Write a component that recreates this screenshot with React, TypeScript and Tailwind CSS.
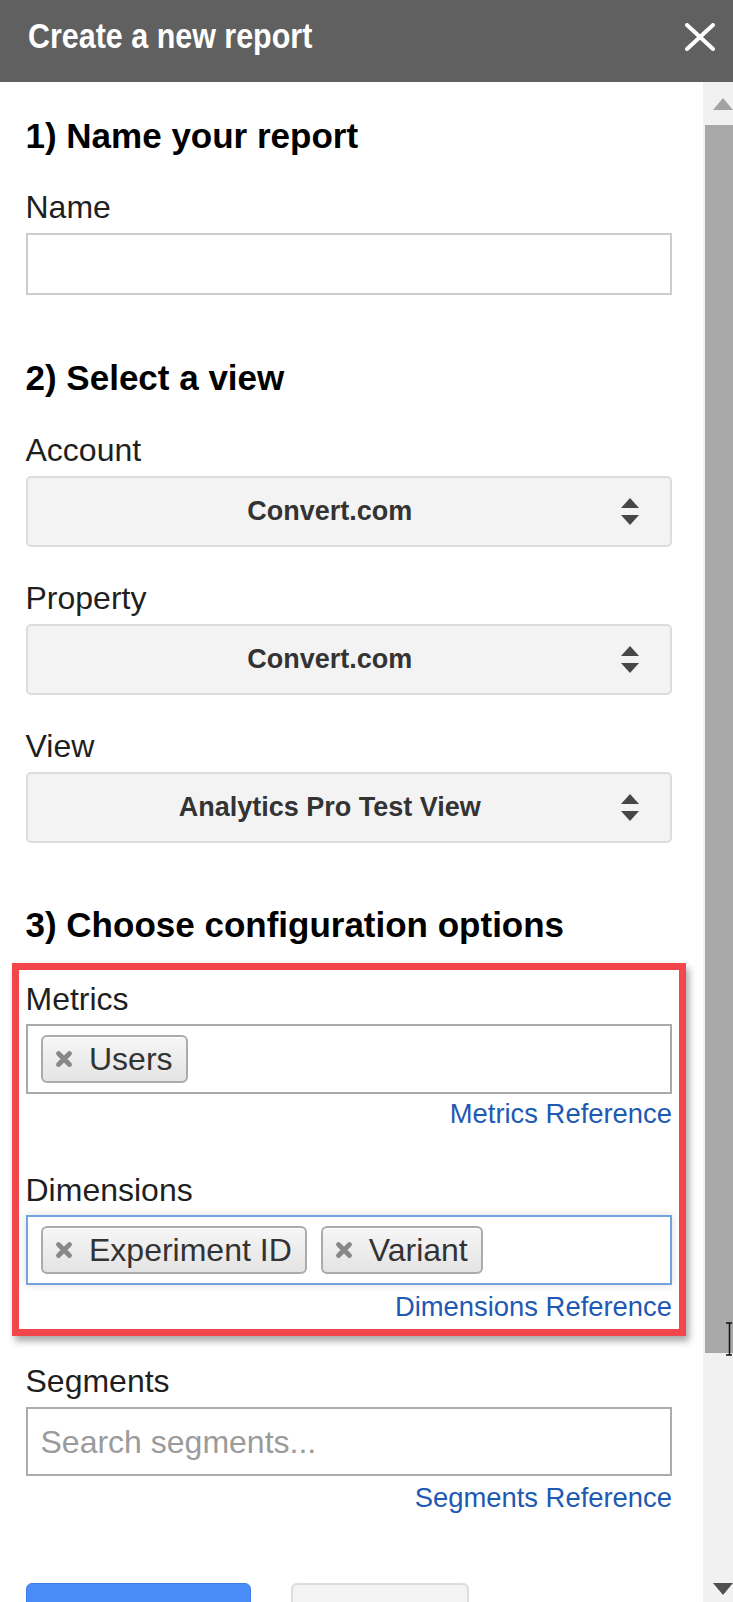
import React from 'react';

const FONT = "font-['Liberation_Sans',Arial,sans-serif]";

const Label: React.FC<{ text: string; className?: string }> = ({ text, className = '' }) => (
  <div className={`text-[32px] leading-[36px] text-[#1f1f1f] ${className}`}>{text}</div>
);

const Heading: React.FC<{ text: string; className?: string }> = ({ text, className = '' }) => (
  <h2 className={`text-[35px] leading-[40px] font-bold text-black ${className}`}>{text}</h2>
);

const SelectBox: React.FC<{ value: string }> = ({ value }) => (
  <div className="relative mt-[8px] h-[71px] rounded-[5px] border-2 border-[#dcdcdc] bg-[#f3f3f3] flex items-center pr-[38px]">
    <span className="flex-1 text-center text-[27px] font-bold text-[#333]">{value}</span>
    {/* up / down arrows */}
    <svg className="absolute right-[31px] top-1/2 -translate-y-1/2" width="18" height="28" viewBox="0 0 18 28">
      <polygon points="9,0 18,10 0,10" fill="#474747" />
      <polygon points="0,17 18,17 9,27" fill="#474747" />
    </svg>
  </div>
);

const Chip: React.FC<{ text: string }> = ({ text }) => (
  <div className="h-[48px] shrink-0 flex items-center rounded-[6px] border-2 border-[#ababab] bg-gradient-to-b from-[#f6f6f6] to-[#e4e4e4] pl-[12px] pr-[13px] shadow-[inset_0_1px_0_#ffffff]">
    <svg width="18" height="18" viewBox="0 0 18 18" className="mr-[16px]">
      <path d="M3.5 3.5 L14.5 14.5 M14.5 3.5 L3.5 14.5" stroke="#888888" strokeWidth="4.8" strokeLinecap="round" />
    </svg>
    <span className="text-[32px] leading-[36px] text-[#333]">{text}</span>
  </div>
);

const RefLink: React.FC<{ text: string; className?: string }> = ({ text, className = '' }) => (
  <div className={`text-right text-[27.4px] leading-[32px] text-[#1e59b4] ${className}`}>{text}</div>
);

export default function App() {
  return (
    <div className={`w-[733px] h-[1602px] overflow-hidden bg-white flex flex-col relative ${FONT}`}>
      {/* title bar */}
      <header className="h-[82px] shrink-0 bg-[#606060] flex justify-between items-start pl-[28px] pr-[18px]">
        <div className="pt-[16px]">
          <span className="inline-block origin-left scale-x-[0.87] text-[35px] leading-[40px] font-bold text-white whitespace-nowrap">
            Create a new report
          </span>
        </div>
        <svg className="mt-[23px]" width="30" height="28" viewBox="0 0 30 28">
          <path d="M2 2 L28 26 M28 2 L2 26" stroke="#ffffff" strokeWidth="4" strokeLinecap="round" />
        </svg>
      </header>

      <div className="flex flex-1 min-h-0">
        <main className="flex-1 min-w-0 overflow-hidden pl-[25.5px] pr-[31px]">
          <Heading text="1) Name your report" className="mt-[34px]" />
          <Label text="Name" className="mt-[33px]" />
          <div className="mt-[8px] h-[62px] border-2 border-[#cdcdcd]" />

          <Heading text="2) Select a view" className="mt-[63px]" />
          <Label text="Account" className="mt-[34px]" />
          <SelectBox value="Convert.com" />
          <Label text="Property" className="mt-[33px]" />
          <SelectBox value="Convert.com" />
          <Label text="View" className="mt-[33px]" />
          <SelectBox value="Analytics Pro Test View" />

          <Heading text="3) Choose configuration options" className="mt-[62px]" />

          {/* highlighted block */}
          <div className="mt-[18px] -mx-[13.5px] border-[7px] border-[#f2464c] bg-white px-[6.5px] pt-[11px] pb-[6px] shadow-[3px_5px_7px_rgba(0,0,0,0.35)]">
            <Label text="Metrics" />
            <div className="mt-[7px] h-[70px] border-2 border-[#a9a9a9] pl-[13.5px] flex items-center gap-[14px]">
              <Chip text="Users" />
            </div>
            <RefLink text="Metrics Reference" className="mt-[4px]" />

            <Label text="Dimensions" className="mt-[42px]" />
            <div className="mt-[7px] h-[70px] border-2 border-[#72a2e0] pl-[13.5px] flex items-center gap-[14px] shadow-[0_0_8px_rgba(0,0,0,0.15)]">
              <Chip text="Experiment ID" />
              <Chip text="Variant" />
            </div>
            <RefLink text="Dimensions Reference" className="mt-[6px]" />
          </div>

          <Label text="Segments" className="mt-[27px]" />
          <div className="mt-[8px] h-[69px] border-2 border-[#acacac] pl-[13px] flex items-center">
            <span className="text-[32px] leading-[36px] text-[#9b9b9b]">Search segments...</span>
          </div>
          <RefLink text="Segments Reference" className="mt-[6px]" />

          <div className="mt-[69px] flex gap-[40px]">
            <div className="w-[225px] h-[60px] rounded-[6px] bg-[#4b8df8] border border-[#3b7fe8]" />
            <div className="w-[178px] h-[60px] rounded-[6px] bg-[#f3f3f3] border-2 border-[#dcdcdc]" />
          </div>
        </main>

        {/* scrollbar */}
        <div className="w-[30px] shrink-0 bg-[#f1f1f1] flex flex-col">
          <svg className="shrink-0 mt-[16px] ml-[10px]" width="20" height="12" viewBox="0 0 20 12">
            <polygon points="10,0 20,12 0,12" fill="#a3a3a3" />
          </svg>
          <div className="shrink-0 mt-[15px] ml-[2px] h-[1228px] bg-[#a8a8a8]" />
          <div className="flex-1" />
          <svg className="shrink-0 mb-[7px] ml-[10px]" width="20" height="12" viewBox="0 0 20 12">
            <polygon points="0,0 20,0 10,12" fill="#4f4f4f" />
          </svg>
        </div>
      </div>

      {/* mouse cursor */}
      <svg className="absolute left-[726px] top-[1322px]" width="7" height="34" viewBox="0 0 7 34">
        <path d="M0 1 H6 M3.5 1 V33 M0 33 H6" stroke="#111" strokeWidth="1.5" fill="none" />
      </svg>
    </div>
  );
}
